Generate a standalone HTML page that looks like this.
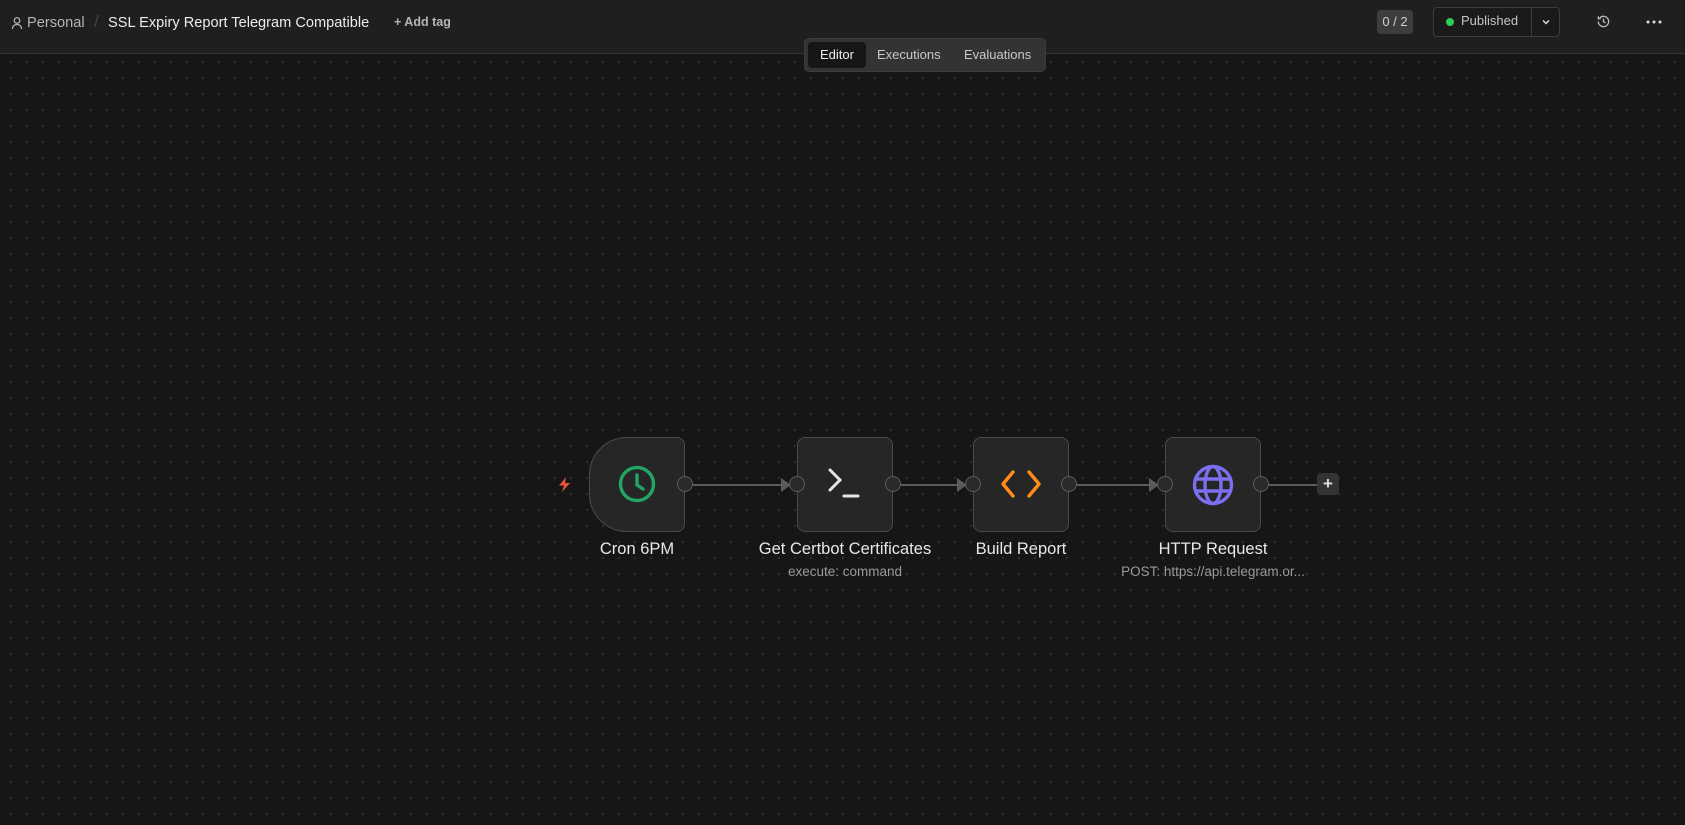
<!DOCTYPE html>
<html><head><meta charset="utf-8"><style>
*{box-sizing:border-box;margin:0;padding:0}
body{width:1685px;height:825px;overflow:hidden;background:#161616;font-family:"Liberation Sans",sans-serif;position:relative;
background-image:radial-gradient(circle,#363636 0.8px,transparent 1.1px);background-size:16px 16px;background-position:3px 6px}
.hdr{position:absolute;left:0;top:0;width:1685px;height:54px;background:#1f1f1f;border-bottom:1px solid #333}
.t{position:absolute;white-space:nowrap}
.node{position:absolute;top:437px;width:96px;height:95px;background:#262626;border:1px solid #4a4a4a;border-radius:8px}
.h{position:absolute;width:16px;height:16px;border-radius:50%;background:#2a2a2a;border:1px solid #5a5a5a;top:476px}
.line{position:absolute;height:2px;background:#5a5a5a;top:484px}
.arr{position:absolute;top:478px;width:0;height:0;border-top:7px solid transparent;border-bottom:7px solid transparent;border-left:10px solid #5a5a5a}
.lbl{position:absolute;width:300px;text-align:center;color:#e8e8e8;font-size:16.5px;top:540px}
.sub{position:absolute;width:300px;text-align:center;color:#9a9a9a;font-size:13.5px;top:564px}
</style></head><body>
<div class="hdr">
 <svg class="t" style="left:11px;top:16px" width="12" height="14" viewBox="0 0 12 14" fill="none" stroke="#bbb" stroke-width="1.2"><circle cx="6" cy="4.5" r="2.8"/><path d="M1.5 13c0-3 2-4.5 4.5-4.5s4.5 1.5 4.5 4.5"/></svg>
 <div class="t" style="left:27px;top:15px;font-size:14.6px;color:#b5b5b5">Personal</div>
 <div class="t" style="left:94px;top:12px;font-size:17px;color:#444">/</div>
 <div class="t" style="left:108px;top:15px;font-size:14.6px;color:#ececec">SSL Expiry Report Telegram Compatible</div>
 <div class="t" style="left:394px;top:15px;font-size:12.5px;color:#b5b5b5;font-weight:bold">+ Add tag</div>
 <div class="t" style="left:1377px;top:10px;width:36px;height:24px;background:#3d3d3d;border-radius:4px;color:#d0d0d0;font-size:13px;text-align:center;line-height:24px">0 / 2</div>
 <div class="t" style="left:1433px;top:7px;width:127px;height:30px;border:1px solid #3d3d3d;border-radius:4px;background:#1a1a1a"></div>
 <div class="t" style="left:1531px;top:7px;width:1px;height:30px;background:#3d3d3d"></div>
 <div class="t" style="left:1446px;top:18px;width:8px;height:8px;border-radius:50%;background:#2ecc57"></div>
 <div class="t" style="left:1461px;top:13px;font-size:13px;color:#c5c5c5">Published</div>
 <svg class="t" style="left:1540px;top:16px" width="12" height="12" viewBox="0 0 12 12" fill="none" stroke="#ddd" stroke-width="1.5"><path d="M3 4.5l3 3 3-3"/></svg>
 <svg class="t" style="left:1596px;top:14px" width="15" height="15" viewBox="0 0 16 16" fill="none" stroke="#bbb" stroke-width="1.4"><path d="M2.5 8a5.5 5.5 0 1 0 1.6-3.9"/><path d="M2.5 2.5v2.5h2.5"/><path d="M8 5v3.2l2 1.3"/></svg>
 <svg class="t" style="left:1646px;top:20px" width="16" height="4" viewBox="0 0 16 4" fill="#ddd"><circle cx="2" cy="2" r="1.5"/><circle cx="8" cy="2" r="1.5"/><circle cx="14" cy="2" r="1.5"/></svg>
</div>
<div class="t" style="left:804px;top:38px;width:242px;height:34px;background:#333;border-radius:5px;border:1px solid #3c3c3c"></div>
<div class="t" style="left:808px;top:42px;width:58px;height:26px;background:#161616;border-radius:4px"></div>
<div class="t" style="left:820px;top:47px;font-size:13px;color:#eee">Editor</div>
<div class="t" style="left:877px;top:47px;font-size:13px;color:#c8c8c8">Executions</div>
<div class="t" style="left:964px;top:47px;font-size:13px;color:#c8c8c8">Evaluations</div>

<div class="line" style="left:693px;width:96px"></div><div class="arr" style="left:781px"></div>
<div class="line" style="left:901px;width:64px"></div><div class="arr" style="left:957px"></div>
<div class="line" style="left:1077px;width:80px"></div><div class="arr" style="left:1149px"></div>
<div class="line" style="left:1269px;width:50px"></div>

<div class="node" style="left:589px;border-radius:38px 8px 8px 38px"></div>
<div class="node" style="left:797px"></div>
<div class="node" style="left:973px"></div>
<div class="node" style="left:1165px"></div>

<div class="h" style="left:677px"></div>
<div class="h" style="left:789px"></div><div class="h" style="left:885px"></div>
<div class="h" style="left:965px"></div><div class="h" style="left:1061px"></div>
<div class="h" style="left:1157px"></div><div class="h" style="left:1253px"></div>

<div class="t" style="left:1317px;top:473px;width:22px;height:22px;background:#333;border-radius:4px;color:#ddd;font-size:17px;text-align:center;line-height:21px;font-weight:bold">+</div>

<svg class="t" style="left:557px;top:476px" width="15" height="17" viewBox="0 0 15 17"><path d="M9 1L2 9.5h5L5 16l8-9H8z" fill="#e8533f"/></svg>
<svg class="t" style="left:618px;top:465px" width="38" height="38" viewBox="0 0 38 38" fill="none" stroke="#22a565" stroke-width="3.4" stroke-linecap="round"><circle cx="19" cy="19" r="16.5"/><path d="M19 10v10l6 4"/></svg>
<svg class="t" style="left:827px;top:467px" width="36" height="34" viewBox="0 0 36 34" fill="none" stroke="#e6e6e6" stroke-width="3" stroke-linecap="round"><path d="M3 3l10 10L3 23"/><path d="M17 29h14"/></svg>
<svg class="t" style="left:1001px;top:468px" width="40" height="32" viewBox="0 0 40 32" fill="none" stroke="#ff8c1a" stroke-width="3.4" stroke-linecap="round" stroke-linejoin="round"><path d="M12 4L2 16l10 12"/><path d="M28 4l10 12-10 12"/></svg>
<svg class="t" style="left:1192px;top:464px" width="42" height="42" viewBox="0 0 42 42" fill="none" stroke="#7b6ff0" stroke-width="3.4"><circle cx="21" cy="21" r="18.5"/><ellipse cx="21" cy="21" rx="8" ry="18.5"/><path d="M3 15h36M3 27h36"/></svg>

<div class="lbl" style="left:487px">Cron 6PM</div>
<div class="lbl" style="left:695px">Get Certbot Certificates</div>
<div class="sub" style="left:695px">execute: command</div>
<div class="lbl" style="left:871px">Build Report</div>
<div class="lbl" style="left:1063px">HTTP Request</div>
<div class="sub" style="left:1063px">POST: https://api.telegram.or...</div>
</body></html>
